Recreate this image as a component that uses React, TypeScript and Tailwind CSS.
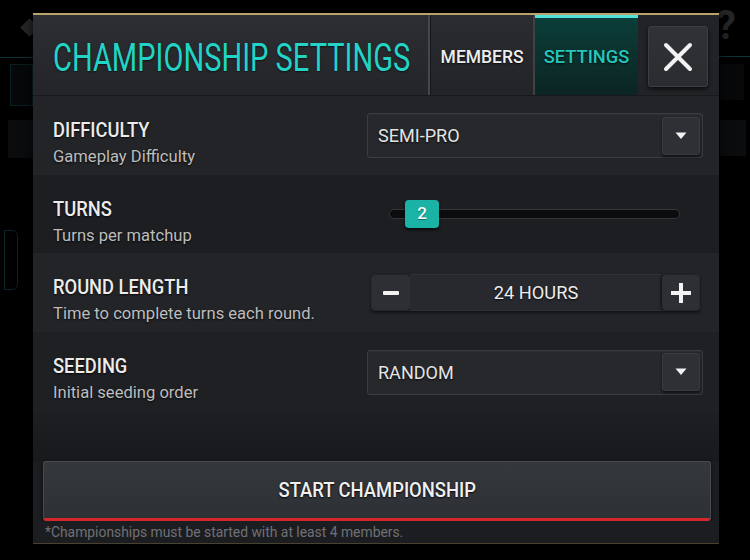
import React from "react";

function Sx({ s, children, center }: { s: string; children: React.ReactNode; center?: boolean }) {
  return <span className={`inline-block whitespace-nowrap ${center ? "origin-center" : "origin-left"} ${s}`}>{children}</span>;
}

function Dropdown({ value }: { value: string }) {
  return (
    <div className="w-[336px] h-[45px] flex items-center justify-between rounded-[3px] border border-[#3a3c41] bg-[#27282c] pl-[10px] pr-[2px] shadow-[inset_0_1px_0_rgba(255,255,255,0.03)]">
      <span className="text-[19px] leading-none text-[#e4e4e4] [text-shadow:0_1px_2px_rgba(0,0,0,0.8)]">
        <Sx s="scale-x-[0.95]">{value}</Sx>
      </span>
      <div className="w-[38px] h-[38px] rounded-[3px] bg-[#2e3035] border border-[#3a3c40] shadow-[0_2px_3px_rgba(0,0,0,0.6)] flex items-center justify-center">
        <svg width="12" height="8" viewBox="0 0 12 8">
          <path d="M0.5 0.5 L11.5 0.5 L6 7 Z" fill="#f2f2f2" />
        </svg>
      </div>
    </div>
  );
}

function Row({
  label,
  sub,
  bg,
  h,
  children,
}: {
  label: string;
  sub: string;
  bg: string;
  h: string;
  children: React.ReactNode;
}) {
  return (
    <div className={`flex ${bg} ${h} pl-[20px] pr-[16px]`}>
      <div className="flex-1 pt-[22px] flex flex-col gap-[4px]">
        <div className="text-[20px] leading-[24px] font-medium text-[#ececec] [text-shadow:0_1px_2px_rgba(0,0,0,0.8)]">
          <Sx s="scale-x-[0.915]">{label}</Sx>
        </div>
        <div className="text-[17px] leading-[20px] text-[#bdbdbd] [text-shadow:0_1px_2px_rgba(0,0,0,0.8)]">
          <Sx s="scale-x-[0.975]">{sub}</Sx>
        </div>
      </div>
      <div className="w-[336px] flex items-center">{children}</div>
    </div>
  );
}

export default function App() {
  return (
    <div className="relative w-[750px] h-[560px] bg-black overflow-hidden font-['Roboto','Liberation_Sans',sans-serif] pt-[13px] pl-[33px]">
      {/* background decorations */}
      <div className="absolute left-0 top-[57px] w-[33px] h-[1px] bg-[#0c3336]" />
      <div className="absolute left-[10px] top-[64px] w-[23px] h-[42px] border border-[#0a1f21] bg-[#060809]" />
      <div className="absolute left-[8px] top-[120px] w-[25px] h-[38px] bg-[#0b0c0e]" />
      <div className="absolute left-[4px] top-[230px] w-[14px] h-[60px] rounded-r-[6px] border border-[#0a2628]" />
      <div className="absolute left-[23px] top-[21px] w-[13px] h-[13px] rotate-45 bg-[#262729]" />
      <div className="absolute left-[719px] top-[56px] w-[31px] h-[1px] bg-[#0c3336]" />
      <div className="absolute left-[720px] top-[64px] w-[24px] h-[36px] bg-[#070809]" />
      <div className="absolute left-[720px] top-[120px] w-[26px] h-[36px] bg-[#0b0c0e]" />
      <div className="absolute left-[716px] top-[6px] text-[40px] leading-none font-bold text-[#262628]">?</div>

      <div className="relative w-[686px] h-[531px] flex flex-col bg-[#1e1f23] border-t-2 border-t-[#b9a36c] border-b border-b-[#4a4230] shadow-[0_0_12px_rgba(0,0,0,0.8)]">
        {/* header */}
        <div className="h-[81px] flex border-b border-b-[#18191c]">
          <div className="w-[395px] flex items-center pl-[20px] bg-gradient-to-b from-[#2c2e33] to-[#232529]">
            <div className="mt-[5px] text-[39px] leading-[40px] font-normal text-[#22d3c6] [text-shadow:0_1px_2px_rgba(0,0,0,0.6)]">
              <Sx s="scale-x-[0.745]">CHAMPIONSHIP SETTINGS</Sx>
            </div>
          </div>
          <div className="w-[3px] flex">
            <div className="w-[2px] bg-[#45474b]" />
            <div className="w-[1px] bg-[#151619]" />
          </div>
          <div className="w-[104px] flex items-center justify-center bg-gradient-to-b from-[#2a2c30] to-[#232428] border-r-2 border-r-[#3f4145]">
            <div className="mt-[2px] text-[19px] leading-none font-medium text-[#ededed] [text-shadow:0_1px_2px_rgba(0,0,0,0.8)]">
              <Sx s="scale-x-[0.92]" center>MEMBERS</Sx>
            </div>
          </div>
          <div className="w-[103px] flex flex-col">
            <div className="h-[3px] bg-[#52e0da]" />
            <div className="flex-1 flex items-center justify-center bg-gradient-to-b from-[#0a3d39] to-[#0b2523]">
              <div className="text-[19px] leading-none font-medium text-[#25c7bb] [text-shadow:0_1px_2px_rgba(0,0,0,0.8)]">
                <Sx s="scale-x-[0.96]" center>SETTINGS</Sx>
              </div>
            </div>
          </div>
          <div className="flex-1 bg-[#222327] pl-[10px] pt-[11px]">
            <div className="w-[60px] h-[61px] rounded-[3px] bg-gradient-to-b from-[#303237] to-[#2a2c30] border border-[#3c3e42] shadow-[0_2px_4px_rgba(0,0,0,0.7)] flex items-center justify-center">
              <svg width="30" height="30" viewBox="0 0 30 30">
                <path d="M3 3 L27 27 M27 3 L3 27" stroke="#f2f2f2" strokeWidth="4" strokeLinecap="round" />
              </svg>
            </div>
          </div>
        </div>

        {/* rows */}
        <Row label="DIFFICULTY" sub="Gameplay Difficulty" bg="bg-[#232428]" h="h-[79px]">
          <Dropdown value="SEMI-PRO" />
        </Row>
        <Row label="TURNS" sub="Turns per matchup" bg="bg-[#1d1e22]" h="h-[78px]">
          <div className="relative w-full h-[28px] flex items-center">
            <div className="ml-[22px] w-[291px] h-[10px] rounded-full border border-[#34363a] bg-[#0b0c0e]" />
            <div className="absolute left-[38px] top-0 w-[34px] h-[28px] rounded-[4px] bg-[#1ab3a6] shadow-[0_2px_3px_rgba(0,0,0,0.7)] flex items-center justify-center text-[17px] font-medium text-white [text-shadow:0_1px_1px_rgba(0,0,0,0.4)]">
              2
            </div>
          </div>
        </Row>
        <Row label="ROUND LENGTH" sub="Time to complete turns each round." bg="bg-[#232428]" h="h-[79px]">
          <div className="ml-[4px] w-[329px] h-[37px] flex rounded-[3px] bg-[#1a1b1e] border border-[#2e3034] shadow-[0_2px_3px_rgba(0,0,0,0.5)]">
            <div className="w-[38px] h-full rounded-[3px] bg-[#2d2f34] shadow-[1px_0_3px_rgba(0,0,0,0.7)] flex items-center justify-center">
              <div className="w-[16px] h-[4px] rounded-[1px] bg-[#f2f2f2]" />
            </div>
            <div className="flex-1 flex items-center justify-center bg-[#28292e] text-[19px] leading-none text-[#ececec] [text-shadow:0_1px_2px_rgba(0,0,0,0.8)]">
              <Sx s="scale-x-[0.96]" center>24 HOURS</Sx>
            </div>
            <div className="w-[37px] h-full rounded-[3px] bg-[#2d2f34] shadow-[-1px_0_3px_rgba(0,0,0,0.7)] flex items-center justify-center">
              <svg width="22" height="22" viewBox="0 0 22 22">
                <path d="M11 1 V21 M1 11 H21" stroke="#f2f2f2" strokeWidth="4" />
              </svg>
            </div>
          </div>
        </Row>
        <Row label="SEEDING" sub="Initial seeding order" bg="bg-[#1f2024]" h="h-[80px]">
          <Dropdown value="RANDOM" />
        </Row>

        {/* spacer */}
        <div className="h-[49px] bg-gradient-to-b from-[#1e1f23] to-[#18191c]" />

        {/* start button */}
        <div className="pl-[10px] pr-[8px] bg-[#1c1d20]">
          <div className="h-[60px] rounded-[3px] border border-[#474a4f] border-b-0 bg-gradient-to-b from-[#34373c] to-[#2d3035] flex flex-col shadow-[0_2px_4px_rgba(0,0,0,0.6)]">
            <div className="flex-1 flex items-center justify-center text-[20px] leading-none font-medium text-[#f0f0f0] [text-shadow:0_1px_2px_rgba(0,0,0,0.9)]">
              <Sx s="scale-x-[0.92]" center>START CHAMPIONSHIP</Sx>
            </div>
            <div className="h-[3px] rounded-b-[2px] bg-[#d5262b]" />
          </div>
        </div>
        <div className="h-[22px] pl-[12px] bg-[#1c1d20] text-[14px] leading-[22px] text-[#707176]">
          <Sx s="scale-x-[0.99]">*Championships must be started with at least 4 members.</Sx>
        </div>
      </div>
    </div>
  );
}
